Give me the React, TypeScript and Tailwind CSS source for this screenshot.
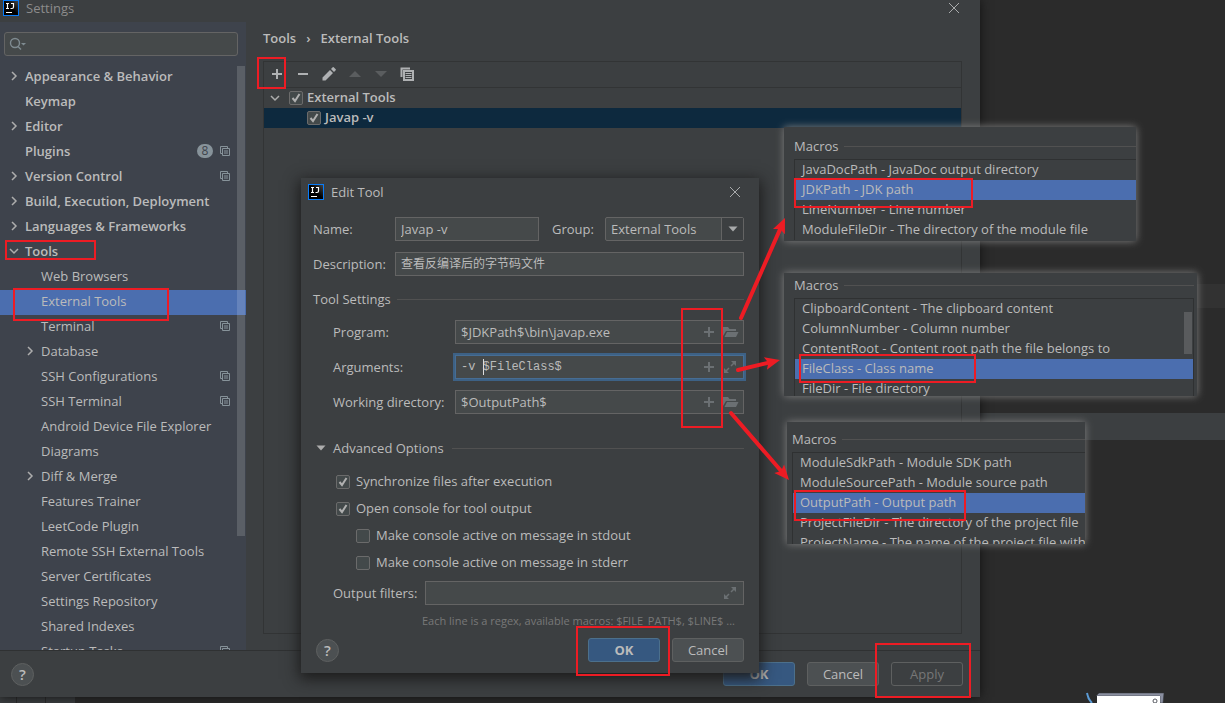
import React from 'react';
import clsx from 'clsx';

type TreeItem = {
  label: string;
  child?: boolean;
  arrow?: 'right' | 'down';
  badge?: string;
  project?: boolean;
  selected?: boolean;
};

const treeItems: TreeItem[] = [
  { label: 'Appearance & Behavior', arrow: 'right' },
  { label: 'Keymap' },
  { label: 'Editor', arrow: 'right' },
  { label: 'Plugins', badge: '8', project: true },
  { label: 'Version Control', arrow: 'right', project: true },
  { label: 'Build, Execution, Deployment', arrow: 'right' },
  { label: 'Languages & Frameworks', arrow: 'right' },
  { label: 'Tools', arrow: 'down' },
  { label: 'Web Browsers', child: true },
  { label: 'External Tools', child: true, selected: true },
  { label: 'Terminal', child: true, project: true },
  { label: 'Database', child: true, arrow: 'right' },
  { label: 'SSH Configurations', child: true, project: true },
  { label: 'SSH Terminal', child: true, project: true },
  { label: 'Android Device File Explorer', child: true },
  { label: 'Diagrams', child: true },
  { label: 'Diff & Merge', child: true, arrow: 'right' },
  { label: 'Features Trainer', child: true },
  { label: 'LeetCode Plugin', child: true },
  { label: 'Remote SSH External Tools', child: true },
  { label: 'Server Certificates', child: true },
  { label: 'Settings Repository', child: true },
  { label: 'Shared Indexes', child: true },
  { label: 'Startup Tasks', child: true, project: true },
];

const IdeaLogo = () => (
  <svg width="16" height="16" viewBox="0 0 16 16" className="shrink-0" aria-hidden="true">
    <defs>
      <linearGradient id="logoBg" x1="0" y1="1" x2="1" y2="0">
        <stop offset="0.5" stopColor="#000" />
        <stop offset="1" stopColor="#4a4a4a" />
      </linearGradient>
    </defs>
    <rect x="0.5" y="0.5" width="15" height="15" fill="url(#logoBg)" stroke="#087cfa" />
    <path d="M3 3.5h3M4.5 3.5v5M3 8.5h3M8 3.5h3M10.5 3v4q0 1.500-1.500 1.500h-1.500" stroke="#fff" strokeWidth="1.200" fill="none" />
    <path d="M3 12.500h6" stroke="#fff" />
  </svg>
);

const Chevron = ({ dir }: { dir: 'right' | 'down' }) => (
  <svg width="10" height="10" viewBox="0 0 10 10" fill="none" stroke="#adadad" strokeWidth="1.500" aria-hidden="true">
    {dir === 'right' ? <path d="M3 1l4 4-4 4" /> : <path d="M1 3l4 4 4-4" />}
  </svg>
);

const ProjectIcon = () => (
  <svg width="10" height="10" viewBox="0 0 10 10" fill="none" stroke="#87939a" aria-hidden="true">
    <path d="M2.500 7.500h-2v-7h7v2" />
    <path d="M2.500 2.500h7v7h-7zM4 5h4M4 7h4" />
  </svg>
);

const CloseIcon = () => (
  <svg width="12" height="12" viewBox="0 0 12 12" stroke="#a9abac" aria-hidden="true">
    <path d="M1 1l10 10M11 1L1 11" />
  </svg>
);

const PlusIcon = ({ color }: { color: string }) => (
  <svg width="16" height="16" viewBox="0 0 16 16" stroke={color} strokeWidth="2" aria-hidden="true">
    <path d="M8 3v10M3 8h10" />
  </svg>
);

const FolderIcon = () => (
  <svg width="16" height="16" viewBox="0 0 16 16" fill="#6b7073" aria-hidden="true">
    <path d="M0 12V3h5l1.500 2H13v2H3z" />
    <path d="M4 8h11.500L13 13H1.500z" />
  </svg>
);

const ExpandIcon = () => (
  <svg width="16" height="16" viewBox="0 0 16 16" fill="#6b7073" aria-hidden="true">
    <path d="M8 2h5v5zM1 9v5h5z" />
    <path d="M11.500 3.500l-3.500 3.500M2.500 12.500l3.500-3.500" stroke="#6b7073" strokeWidth="1.500" />
  </svg>
);

const HelpButton = () => (
  <button aria-label="Help" className="w-[23px] h-[23px] rounded-full border border-[#5e6060] bg-[#4c5052] text-[15px] leading-5 font-semibold text-[#bbbbbb]">
    ?
  </button>
);

const DialogButton = ({ children, kind = 'plain' }: { children: string; kind?: 'plain' | 'primary' | 'disabled' }) => (
  <button
    disabled={kind === 'disabled'}
    className={clsx(
      'w-[72px] h-6 rounded-[3px] border',
      kind === 'plain' && 'bg-[#4c5052] border-[#5e6060]',
      kind === 'primary' && 'bg-[#365880] border-[#4c708c] font-bold',
      kind === 'disabled' && 'border-[#5e6060] text-[#777777]'
    )}
  >
    {children}
  </button>
);

const CheckBox = ({ label, checked = false, bold = false }: { label: string; checked?: boolean; bold?: boolean }) => (
  <label className={clsx('flex items-center', bold ? 'gap-1 font-semibold' : 'gap-[6px]')}>
    <span className="grid w-[14px] h-[14px] shrink-0">
      <input
        type="checkbox"
        defaultChecked={checked}
        className="peer col-start-1 row-start-1 appearance-none w-[14px] h-[14px] rounded-[2px] border border-[#6b6b6b] bg-[#43494a]"
      />
      <svg
        viewBox="0 0 14 14"
        fill="none"
        stroke="#b0b0b0"
        strokeWidth="2"
        className="col-start-1 row-start-1 w-[14px] h-[14px] pointer-events-none invisible peer-checked:visible"
      >
        <path d="M3.500 7l2.500 3 4.500-7" />
      </svg>
    </span>
    <span className="pb-[2px] leading-[18px]">{label}</span>
  </label>
);

const Field = ({ id, value, icon, focused = false }: { id: string; value: string; icon: 'folder' | 'expand'; focused?: boolean }) => (
  <div
    className={clsx(
      'relative flex-1 h-6 flex items-center border bg-[#45494a] pr-1',
      focused ? 'border-[#466d94] ring-2 ring-[#3d6185]' : 'border-[#646464]'
    )}
  >
    <input
      id={id}
      defaultValue={value}
      className={clsx('min-w-0 flex-1 px-[5px] bg-transparent outline-none', focused && "font-['Liberation_Mono',monospace] text-[12px]")}
    />
    {focused && <span className="absolute left-[27px] top-[3px] w-px h-4 bg-[#dddddd]" />}
    {id !== 'filters' && (
      <button aria-label="Insert macro" className="mr-[6px]">
        <PlusIcon color="#6b7073" />
      </button>
    )}
    <button aria-label={icon === 'folder' ? 'Browse' : 'Expand'}>{icon === 'folder' ? <FolderIcon /> : <ExpandIcon />}</button>
  </div>
);

const Sidebar = () => (
  <aside className="relative w-[246px] shrink-0 bg-[#3e434c]">
    <div className="mx-1 mr-2 mt-[10px] h-6 flex items-center rounded-[3px] border border-[#646464] bg-[#45494a] px-1">
      <svg width="18" height="16" viewBox="0 0 18 16" fill="none" stroke="#7f8b91" strokeWidth="1.400" className="shrink-0" aria-hidden="true">
        <circle cx="6" cy="7" r="4.500" />
        <path d="M9 10.500l3 3" />
        <path d="M12 7h5l-2.500 2.500z" fill="#7f8b91" stroke="none" />
      </svg>
      <input aria-label="Search settings" className="min-w-0 flex-1 bg-transparent outline-none" />
    </div>
    <nav className="mt-[9px] h-[585px] overflow-hidden">
      {treeItems.map(item => (
        <button
          key={item.label}
          className={clsx(
            'w-full h-[25px] flex items-center pr-4 pb-[3px] text-left',
            item.child ? 'pl-[25px]' : 'pl-[9px] font-semibold',
            item.selected && 'bg-[#4b6eaf]'
          )}
        >
          <span className="w-4 shrink-0">{item.arrow && <Chevron dir={item.arrow} />}</span>
          <span className="flex-1 whitespace-nowrap">{item.label}</span>
          {item.badge && (
            <span className="w-4 h-[14px] mr-[7px] rounded-full bg-[#87939a] text-center text-[12px] leading-[14px] font-normal text-[#3e434c]">
              {item.badge}
            </span>
          )}
          {item.project && <ProjectIcon />}
        </button>
      ))}
    </nav>
    <div className="absolute right-px top-11 w-2 h-[470px] bg-white/15" />
  </aside>
);

const Toolbar = () => (
  <div className="h-[26px] flex items-center gap-[10px] pl-[5px] pb-[2px] border-b border-[#323435]">
    <button aria-label="Add"><PlusIcon color="#afb1b3" /></button>
    <button aria-label="Remove">
      <svg width="16" height="16" viewBox="0 0 16 16" stroke="#afb1b3" strokeWidth="2"><path d="M3 8h10" /></svg>
    </button>
    <button aria-label="Edit">
      <svg width="16" height="16" viewBox="0 0 16 16" fill="#afb1b3">
        <path d="M1.500 11.500L9 4l3 3-7.500 7.500h-3zM10 3l1.700-1.700q.5-.5 1 0l2 2q.5.500 0 1L13 6z" />
      </svg>
    </button>
    <button aria-label="Move up">
      <svg width="16" height="16" viewBox="0 0 16 16" fill="#5a5d5f"><path d="M2 11h12L8 5z" /></svg>
    </button>
    <button aria-label="Move down">
      <svg width="16" height="16" viewBox="0 0 16 16" fill="#5a5d5f"><path d="M2 5h12l-6 6z" /></svg>
    </button>
    <button aria-label="Copy">
      <svg width="16" height="16" viewBox="0 0 16 16" fill="none" stroke="#afb1b3">
        <path d="M2.500 11V2.500H11" strokeWidth="2" />
        <path d="M5 5h9v9H5z" strokeWidth="2" />
        <path d="M6.500 7.500h6M6.500 9.500h6M6.500 11.500h6" />
      </svg>
    </button>
  </div>
);

const SettingsWindow = () => (
  <section className="relative w-4/5 bg-[#3c3f41] shadow-[0_0_10px_#111111]">
    <header className="h-[22px] flex items-start pl-[3px] pr-5">
      <IdeaLogo />
      <h1 className="ml-[7px] flex-1 leading-4 text-[#8c8c8c]">Settings</h1>
      <button aria-label="Close settings" className="mt-[2px]"><CloseIcon /></button>
    </header>
    <div className="flex h-[628px]">
      <Sidebar />
      <main className="flex-1 flex flex-col pl-[17px] pr-[18px] pt-[6px] pb-4">
        <div className="h-5 flex items-center gap-[10px] font-semibold">
          <span>Tools</span>
          <span>›</span>
          <span>External Tools</span>
        </div>
        <div className="mt-[13px] flex-1 border border-[#323435]">
          <Toolbar />
          <div className="h-5 flex items-center pl-[6px]">
            <Chevron dir="down" />
            <span className="ml-[9px]"><CheckBox label="External Tools" checked bold /></span>
          </div>
          <div className="h-5 flex items-center pl-[43px] bg-[#0d293e]">
            <CheckBox label="Javap -v" checked bold />
          </div>
        </div>
      </main>
    </div>
    <footer className="h-[47px] flex items-center gap-3 pl-[11px] pr-[17px] border-t border-[#2f3132]">
      <HelpButton />
      <span className="flex-1" />
      <DialogButton kind="primary">OK</DialogButton>
      <DialogButton>Cancel</DialogButton>
      <DialogButton kind="disabled">Apply</DialogButton>
    </footer>
  </section>
);

const EditToolDialog = () => (
  <section className="absolute left-[301px] top-[178px] w-[458px] pb-[11px] bg-[#3c3f41] shadow-[0_4px_14px_2px_#1c1c1c]">
    <header className="h-7 flex items-center pl-[7px] pr-[18px]">
      <IdeaLogo />
      <h2 className="ml-[7px] flex-1">Edit Tool</h2>
      <button aria-label="Close dialog"><CloseIcon /></button>
    </header>
    <form className="pl-3 pr-[15px] pt-[11px]" onSubmit={e => e.preventDefault()}>
      <div className="flex items-center">
        <label htmlFor="name" className="w-[82px]">Name:</label>
        <input id="name" defaultValue="Javap -v" className="w-36 h-6 px-[5px] border border-[#646464] bg-[#45494a] outline-none" />
        <label htmlFor="group" className="w-[53px] ml-[13px]">Group:</label>
        <div className="flex-1 grid h-6">
          <select id="group" className="col-start-1 row-start-1 appearance-none px-[5px] rounded-[2px] border border-[#646464] bg-[#45494a] outline-none">
            <option>External Tools</option>
          </select>
          <span className="col-start-1 row-start-1 justify-self-end w-[22px] my-px mr-px border-l border-[#646464] grid place-items-center bg-[#3c3f41] pointer-events-none">
            <svg width="10" height="6" viewBox="0 0 10 6" fill="#a8aaab"><path d="M0.500 0.500h9L5 5.500z" /></svg>
          </span>
        </div>
      </div>
      <div className="mt-[11px] flex items-center">
        <label htmlFor="description" className="w-[82px]">Description:</label>
        <input id="description" defaultValue="查看反编译后的字节码文件" className="min-w-0 flex-1 h-6 px-[5px] pb-[2px] text-[12px] border border-[#646464] bg-[#45494a] outline-none" />
      </div>
      <h3 className="mt-[13px] h-5 flex items-center after:ml-[6px] after:h-px after:flex-1 after:bg-[#515151]">Tool Settings</h3>
      <div className="mt-[11px] pl-5 flex flex-col gap-[11px]">
        <div className="flex items-center">
          <label htmlFor="program" className="w-[122px]">Program:</label>
          <Field id="program" value="$JDKPath$\bin\javap.exe" icon="folder" />
        </div>
        <div className="flex items-center">
          <label htmlFor="arguments" className="w-[122px]">Arguments:</label>
          <Field id="arguments" value="-v $FileClass$" icon="expand" focused />
        </div>
        <div className="flex items-center">
          <label htmlFor="workdir" className="w-[122px]">Working directory:</label>
          <Field id="workdir" value="$OutputPath$" icon="folder" />
        </div>
      </div>
      <button className="mt-6 w-full h-5 flex items-center pl-[3px] after:ml-2 after:h-px after:flex-1 after:bg-[#515151]">
        <svg width="10" height="6" viewBox="0 0 10 6" fill="#adadad" className="mr-[7px]"><path d="M0.500 0.500h9L5 5.500z" /></svg>
        Advanced Options
      </button>
      <div className="mt-[10px] pl-[23px] grid auto-rows-[27px] items-center">
        <CheckBox label="Synchronize files after execution" checked />
        <CheckBox label="Open console for tool output" checked />
        <div className="pl-5"><CheckBox label="Make console active on message in stdout" /></div>
        <div className="pl-5"><CheckBox label="Make console active on message in stderr" /></div>
      </div>
      <div className="mt-[5px] pl-5 flex items-center">
        <label htmlFor="filters" className="w-[92px]">Output filters:</label>
        <Field id="filters" value="" icon="expand" />
      </div>
      <p className="mt-2 pl-[109px] text-[11px] leading-4 whitespace-nowrap text-[#787878]">
        Each line is a regex, available macros: $FILE_PATH$, $LINE$ ...
      </p>
      <div className="mt-[9px] pl-[3px] flex items-center gap-3">
        <HelpButton />
        <span className="flex-1" />
        <DialogButton kind="primary">OK</DialogButton>
        <DialogButton>Cancel</DialogButton>
      </div>
    </form>
  </section>
);

const MacroPopup = ({ className, listClassName, items, selected, thumb = false }: {
  className: string;
  listClassName: string;
  items: string[];
  selected: number;
  thumb?: boolean;
}) => (
  <section className={clsx('absolute flex flex-col overflow-hidden bg-[#3c3f41] shadow-[0_0_8px_#808080]', className)}>
    <h3 className="h-5 shrink-0 flex items-center after:ml-[6px] after:h-px after:flex-1 after:bg-[#515151]">Macros</h3>
    <ul className={clsx('relative shrink-0 border-t border-l border-[#2f3132]', listClassName)}>
      {items.map((item, i) => (
        <li key={item} className={clsx('h-5 pl-[7px] leading-[18px] whitespace-nowrap', i === selected && 'bg-[#4b6eaf]')}>
          {item}
        </li>
      ))}
      {thumb && <li aria-hidden="true" className="absolute right-px top-[13px] w-2 h-[42px] bg-[#595b5d]" />}
    </ul>
  </section>
);

const marks = [
  [258, 58, 27, 30],
  [6, 241, 89, 18],
  [14, 289, 154, 31],
  [682, 309, 40, 118],
  [795, 179, 177, 28],
  [800, 355, 175, 27],
  [795, 491, 170, 29],
  [577, 627, 92, 48],
  [876, 644, 94, 53],
];

const arrows = [
  [741, 318, 785, 218],
  [738, 370, 780, 360],
  [731, 413, 789, 480],
];

const Annotations = () => (
  <svg className="absolute left-0 top-0 pointer-events-none" width="1225" height="703" fill="none" stroke="#ed1c24" strokeWidth="2" aria-hidden="true">
    <defs>
      <marker id="head" markerUnits="userSpaceOnUse" markerWidth="20" markerHeight="16" refX="16" refY="8" orient="auto">
        <path d="M16 8L1 1.500 4 8 1 14.500z" fill="#ed1c24" stroke="none" />
      </marker>
    </defs>
    {marks.map(([x, y, w, h]) => (
      <rect key={`${x}-${y}`} x={x} y={y} width={w} height={h} />
    ))}
    {arrows.map(([x1, y1, x2, y2]) => {
      // stop the shaft short so the round cap stays under the head
      const len = Math.hypot(x2 - x1, y2 - y1);
      const sx = x2 - ((x2 - x1) / len) * 8;
      const sy = y2 - ((y2 - y1) / len) * 8;
      return (
        <g key={x1}>
          <path d={`M${x1} ${y1}L${sx} ${sy}`} strokeWidth="4" strokeLinecap="round" />
          <path d={`M${x1} ${y1}L${x2} ${y2}`} stroke="none" markerEnd="url(#head)" />
        </g>
      );
    })}
  </svg>
);

const App = () => (
  <div className="relative min-h-screen overflow-hidden bg-[#2b2b2b] font-['Open_Sans','Noto_Sans_CJK_SC',sans-serif] text-[13px] leading-5 text-[#bbbbbb]">
    <div className="absolute right-0 top-[284px] w-1/5 h-6 bg-[#323232]" />
    <div className="absolute right-0 top-[413px] w-1/5 h-[27px] bg-[#3c3f41]" />
    <SettingsWindow />
    <div className="flex h-[6px]">
      <span className="w-[17px] bg-[#3c3f41] border-r border-[#2b2b2b]" />
      <span className="w-[29px] bg-[#3c3f41] border-r border-[#2b2b2b]" />
      <span className="w-[29px] bg-[#3c3f41]" />
    </div>
    <svg className="absolute right-[58px] bottom-0" width="82" height="11" viewBox="0 0 82 11" aria-hidden="true">
      <path d="M2 1q1 6 5 10" stroke="#5b9bd5" strokeWidth="2" fill="none" />
      <path d="M11 4L14 1h65l-1 10h-3V4z" fill="#8a8fa0" stroke="#33343a" strokeWidth="0.500" />
      <path d="M12 4h63v7H12z" fill="#ffffff" />
      <circle cx="70" cy="9" r="2" fill="none" stroke="#55575f" />
    </svg>
    <EditToolDialog />
    <MacroPopup
      className="left-[784px] top-[127px] w-[352px] h-[114px] pl-[10px] pt-[9px]"
      listClassName="mt-[3px]"
      selected={1}
      items={[
        'JavaDocPath - JavaDoc output directory',
        'JDKPath - JDK path',
        'LineNumber - Line number',
        'ModuleFileDir - The directory of the module file',
      ]}
    />
    <MacroPopup
      className="left-[784px] top-[273px] w-[413px] h-[123px] pl-[10px] pr-[3px] pt-[2px]"
      listClassName="mt-[3px] border-r"
      selected={3}
      thumb
      items={[
        'ClipboardContent - The clipboard content',
        'ColumnNumber - Column number',
        'ContentRoot - Content root path the file belongs to',
        'FileClass - Class name',
        'FileDir - File directory',
      ]}
    />
    <MacroPopup
      className="left-[787px] top-[422px] w-[298px] h-[122px] pl-[5px] pt-[7px]"
      listClassName="mt-[3px]"
      selected={2}
      items={[
        'ModuleSdkPath - Module SDK path',
        'ModuleSourcePath - Module source path',
        'OutputPath - Output path',
        'ProjectFileDir - The directory of the project file',
        'ProjectName - The name of the project file without extension',
      ]}
    />
    <Annotations />
  </div>
);

export default App;
